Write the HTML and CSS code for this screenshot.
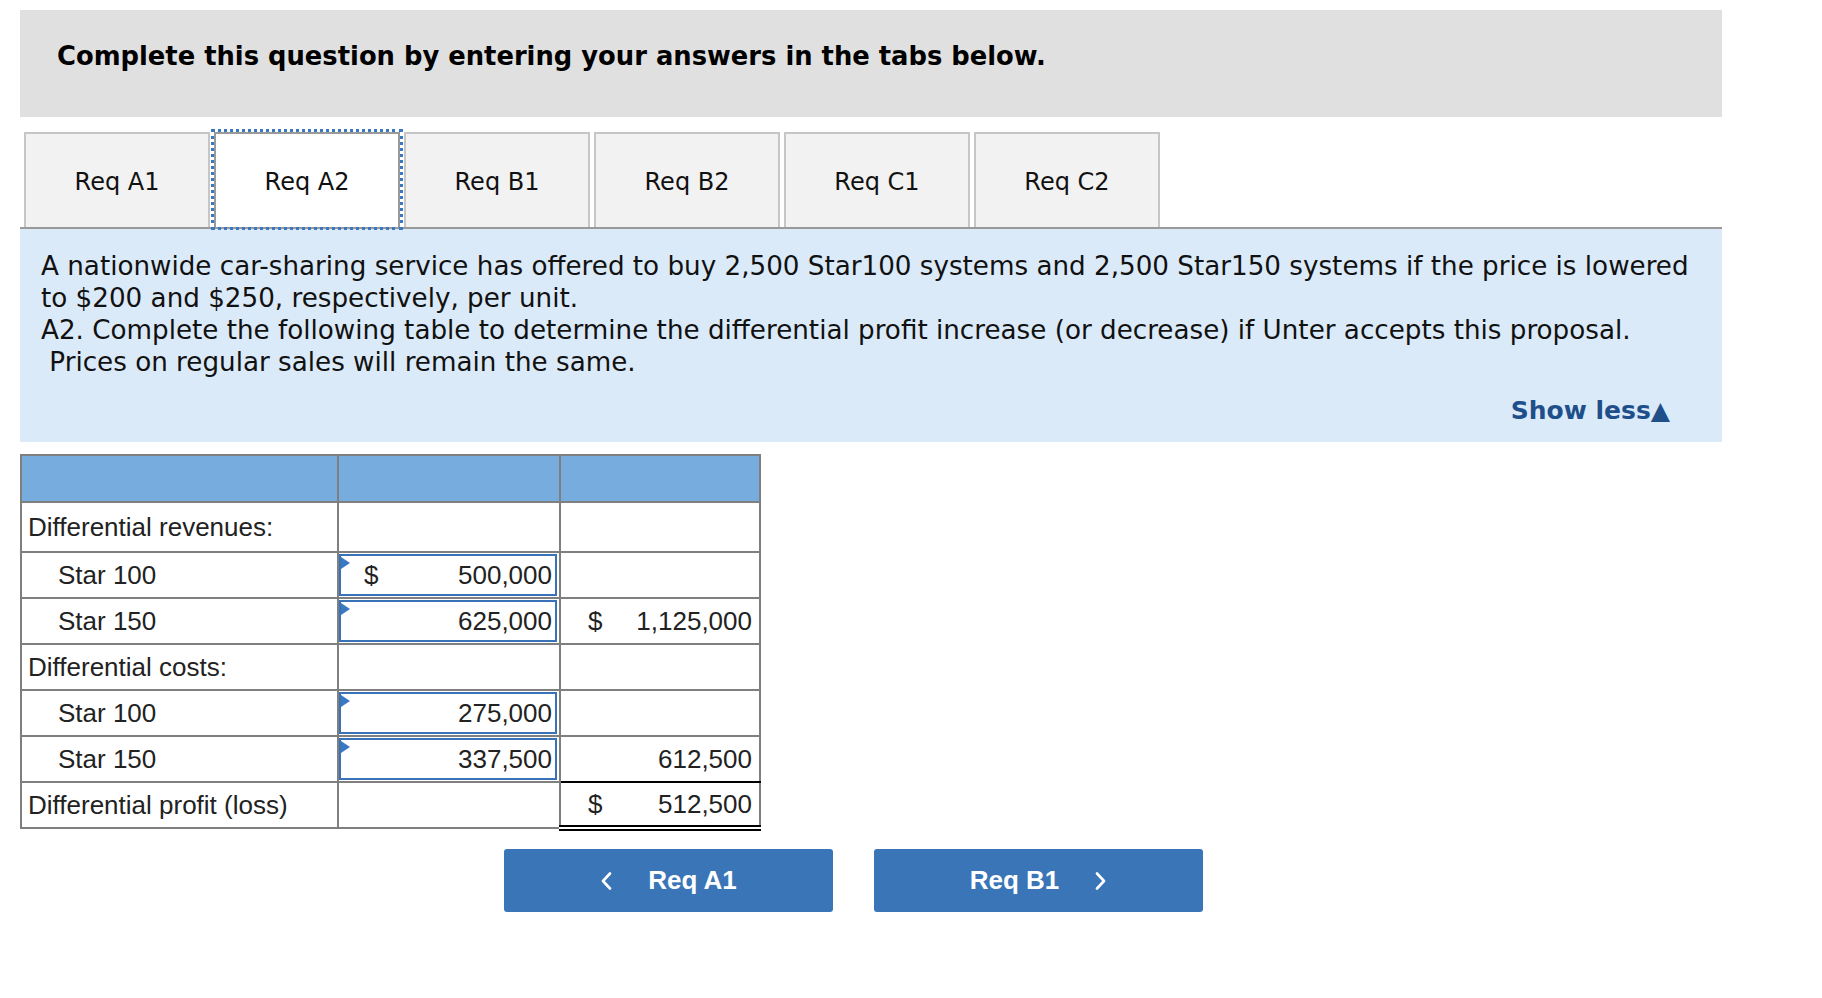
FILE: index.html
```html
<!DOCTYPE html>
<html lang="en">
<head>
<meta charset="utf-8">
<title>Req A2</title>
<link rel="stylesheet" href="styles.css">
</head>
<body>
<div class="page">
  <div class="banner">
    <h1 class="banner-title">Complete this question by entering your answers in the tabs below.</h1>
  </div>

  <div class="tabs">
    <div class="tab">Req A1</div>
    <div class="tab active">Req A2</div>
    <div class="tab">Req B1</div>
    <div class="tab">Req B2</div>
    <div class="tab">Req C1</div>
    <div class="tab">Req C2</div>
  </div>

  <div class="info">
    <p class="info-text">A nationwide car-sharing service has offered to buy 2,500 Star100 systems and 2,500 Star150 systems if the price is lowered<br>to $200 and $250, respectively, per unit.<br>A2. Complete the following table to determine the differential profit increase (or decrease) if Unter accepts this proposal.<br>&nbsp;Prices on regular sales will remain the same.</p>
    <div class="show-less">Show less&#9650;</div>
  </div>

  <table class="grid">
    <colgroup>
      <col class="c-label">
      <col class="c-input">
      <col class="c-total">
    </colgroup>
    <thead>
      <tr class="head-row"><th></th><th></th><th></th></tr>
    </thead>
    <tbody>
      <tr class="row-tall">
        <td class="label">Differential revenues:</td>
        <td></td>
        <td></td>
      </tr>
      <tr>
        <td class="label indent">Star 100</td>
        <td class="inp-cell"><div class="inp"><span class="cur">$</span><span class="num">500,000</span></div></td>
        <td></td>
      </tr>
      <tr>
        <td class="label indent">Star 150</td>
        <td class="inp-cell"><div class="inp"><span class="cur"></span><span class="num">625,000</span></div></td>
        <td class="total"><span class="cur">$</span><span class="num">1,125,000</span></td>
      </tr>
      <tr>
        <td class="label">Differential costs:</td>
        <td></td>
        <td></td>
      </tr>
      <tr>
        <td class="label indent">Star 100</td>
        <td class="inp-cell"><div class="inp"><span class="cur"></span><span class="num">275,000</span></div></td>
        <td></td>
      </tr>
      <tr>
        <td class="label indent">Star 150</td>
        <td class="inp-cell"><div class="inp"><span class="cur"></span><span class="num">337,500</span></div></td>
        <td class="total underline"><span class="cur"></span><span class="num">612,500</span></td>
      </tr>
      <tr>
        <td class="label">Differential profit (loss)</td>
        <td></td>
        <td class="total double"><span class="cur">$</span><span class="num">512,500</span></td>
      </tr>
    </tbody>
  </table>

  <div class="nav">
    <button class="nav-btn">
      <svg class="chev" width="12" height="18" viewBox="0 0 12 18"><path d="M10 1.5 L3 9 L10 16.5" fill="none" stroke="#fff" stroke-width="2.6" stroke-linecap="round" stroke-linejoin="round"/></svg>
      <span>Req A1</span>
    </button>
    <button class="nav-btn">
      <span>Req B1</span>
      <svg class="chev" width="12" height="18" viewBox="0 0 12 18"><path d="M2 1.5 L9 9 L2 16.5" fill="none" stroke="#fff" stroke-width="2.6" stroke-linecap="round" stroke-linejoin="round"/></svg>
    </button>
  </div>
</div>
</body>
</html>
```

FILE: styles.css
```css
* { box-sizing: border-box; }

html, body {
  margin: 0;
  padding: 0;
  background: #ffffff;
}

body {
  font-family: "DejaVu Sans", Verdana, sans-serif;
  color: #000;
}

.page {
  padding: 10px 0 0 20px;
  width: 1722px;
}

.banner {
  background: #e0e0e0;
  height: 107px;
  padding: 29px 0 0 37px;
}

.banner-title {
  margin: 0;
  font-size: 25.8px;
  font-weight: bold;
  line-height: 34px;
  color: #000;
}

.tabs {
  display: flex;
  gap: 4px;
  padding: 15px 0 0 4px;
  border-bottom: 2px solid #9a9a9a;
}

.tab {
  width: 186px;
  height: 95px;
  background: #f2f2f2;
  border: 2px solid #c6c6c6;
  border-bottom: none;
  display: flex;
  align-items: center;
  justify-content: center;
  font-size: 24px;
  color: #111;
  padding-top: 3px;
}

.tab.active {
  background: #ffffff;
  border-color: #9a9a9a;
  outline: 3px dotted #3a78c2;
  outline-offset: 0px;
}

.info {
  background: #dbeaf8;
  padding: 21px 16px 15px 21px;
}

.info-text {
  margin: 0;
  font-size: 26.2px;
  line-height: 32px;
  color: #111;
  white-space: nowrap;
}

.show-less {
  margin-top: 17px;
  padding-right: 36px;
  text-align: right;
  font-size: 25px;
  font-weight: bold;
  line-height: 32px;
  color: #1f4f8b;
}

.grid {
  margin-top: 12px;
  border-collapse: collapse;
  table-layout: fixed;
  width: 739px;
  border: 2px solid #7f7f7f;
  font-family: "Liberation Sans", Arial, sans-serif;
  font-size: 26px;
  color: #222;
}

.c-label { width: 317px; }
.c-input { width: 222px; }
.c-total { width: 200px; }

.grid th,
.grid td {
  border: 2px solid #7f7f7f;
  padding: 0;
  height: 46px;
}

.head-row th {
  background: #77acdf;
  height: 47px;
}

.row-tall td { height: 50px; }

.label {
  padding-left: 6px !important;
  white-space: nowrap;
}

.label.indent {
  padding-left: 36px !important;
}

.inp-cell {
  padding: 1px 2px 1px 0 !important;
}

.inp {
  position: relative;
  height: 42px;
  border: 2px solid #3a72b8;
  display: flex;
  align-items: center;
  justify-content: space-between;
  padding: 0 3px 0 23px;
}

.inp::before {
  content: "";
  position: absolute;
  left: 0;
  top: 1px;
  border-top: 6px solid transparent;
  border-bottom: 6px solid transparent;
  border-left: 9px solid #3a78c2;
}

.total {
  padding: 0 7px 0 27px !important;
  text-align: right;
}

.total .cur,
.total .num {
  display: inline-block;
}

.total .cur {
  float: left;
}

.underline {
  border-bottom: 2px solid #000 !important;
}

.double {
  border-bottom: 6px double #000 !important;
}

.nav {
  display: flex;
  gap: 41px;
  margin: 18px 0 0 484px;
}

.nav-btn {
  width: 329px;
  height: 63px;
  background: #3a75b7;
  border: none;
  border-radius: 3px;
  color: #fff;
  font-family: "Liberation Sans", Arial, sans-serif;
  font-weight: bold;
  font-size: 26px;
  display: flex;
  align-items: center;
  justify-content: center;
  gap: 36px;
  padding: 0;
}

.chev {
  display: block;
}
```
